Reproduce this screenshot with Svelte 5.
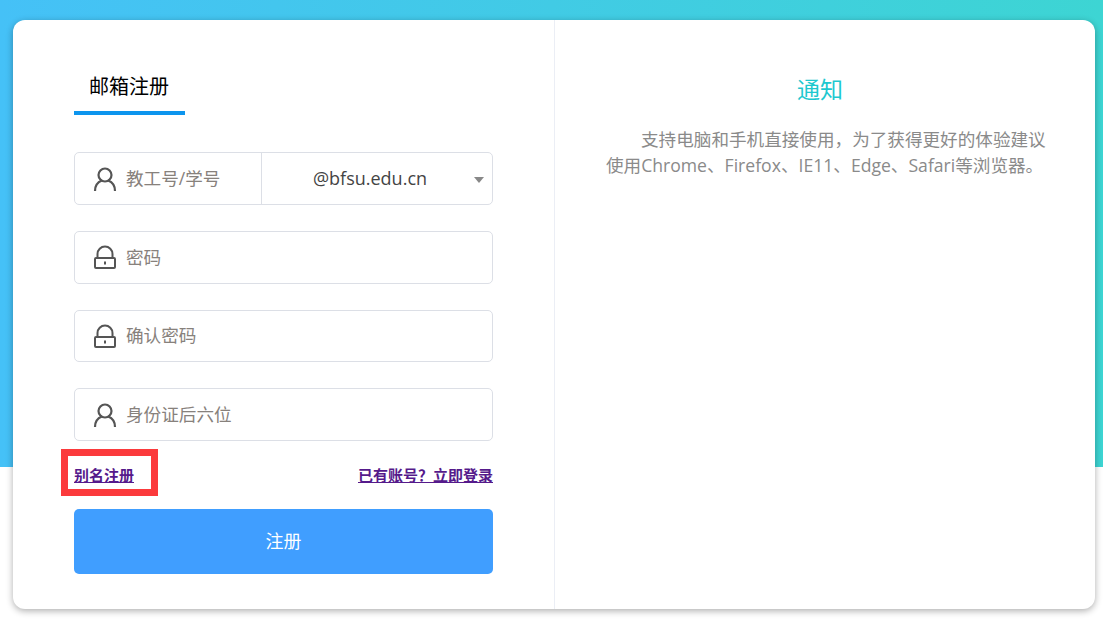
<script>
  const fields = [
    { icon: 'lock', placeholder: '密码' },
    { icon: 'lock', placeholder: '确认密码' },
    { icon: 'user', placeholder: '身份证后六位' }
  ];
</script>

{#snippet fieldIcon(name)}
  {#if name === 'user'}
    <svg class="icon" width="24" height="24" viewBox="0 0 24 24" fill="none" stroke="#555" stroke-width="2.200">
      <circle cx="12" cy="8" r="6.500" />
      <path d="M2 24c0-5.500 3-9 6.800-10.500M22 24c0-5.500-3-9-6.800-10.500" />
    </svg>
  {:else}
    <svg class="icon" width="24" height="24" viewBox="0 0 24 24" fill="none" stroke="#555" stroke-width="2">
      <path d="M4.500 13V9a7.500 7.500 0 0 1 15 0v4" />
      <rect x="2" y="13" width="20" height="10" rx="1" />
      <path d="M12 16.500v3" />
    </svg>
  {/if}
{/snippet}

<div class="page">
  <div class="hero"></div>
  <main class="card">
    <section class="form-side">
      <div class="tabs">
        <span class="tab">邮箱注册</span>
      </div>

      <div class="field first">
        <div class="name-part">
          {@render fieldIcon('user')}
          <span class="placeholder">教工号/学号</span>
        </div>
        <div class="domain">
          <span>@bfsu.edu.cn</span>
          <i class="caret"></i>
        </div>
      </div>

      {#each fields as field}
        <div class="field">
          <div class="name-part">
            {@render fieldIcon(field.icon)}
            <span class="placeholder">{field.placeholder}</span>
          </div>
        </div>
      {/each}

      <div class="links">
        <span class="alias">
          <a href="#alias">别名注册</a>
          <span class="marker"></span>
        </span>
        <a href="#login">已有账号？立即登录</a>
      </div>

      <button class="submit">注册</button>
    </section>

    <aside class="notice">
      <h2>通知</h2>
      <p>支持电脑和手机直接使用，为了获得更好的体验建议使用Chrome、Firefox、IE11、Edge、Safari等浏览器。</p>
    </aside>
  </main>
</div>

<style>
  :global(body) {
    font-family: "Open Sans", "Noto Sans CJK SC", sans-serif;
    background: #fff;
  }

  .page {
    position: relative;
    height: 633px;
    padding: 20px 8px 0 13px;
    box-sizing: border-box;
    overflow: hidden;
  }

  .hero {
    position: absolute;
    left: 0;
    top: 0;
    right: 0;
    height: 467px;
    background: linear-gradient(90deg, #45c1f7, #3dd5d3);
  }

  .card {
    position: relative;
    display: flex;
    height: 589px;
    background: #fff;
    border-radius: 12px;
    box-shadow: 0 2px 7px rgba(0, 0, 0, 0.32);
  }

  .form-side {
    flex: none;
    width: 542px;
    box-sizing: border-box;
    padding: 47px 61px 0;
    border-right: 1px solid #ebeef5;
  }

  .tabs {
    display: flex;
    height: 48px;
  }

  .tab {
    width: 111px;
    box-sizing: border-box;
    padding-left: 15px;
    height: 48px;
    line-height: 40px;
    font-size: 20px;
    color: #000;
    border-bottom: 4px solid #0d95ee;
  }

  .field {
    display: flex;
    height: 52.700px;
    margin-bottom: 26px;
    box-sizing: border-box;
    border: 1px solid #dcdfe6;
    border-radius: 5px;
  }

  .field.first {
    margin-top: 37.200px;
  }

  .name-part {
    display: flex;
    align-items: center;
    flex: none;
    width: 187px;
    padding-left: 18px;
    box-sizing: border-box;
  }

  .field.first .name-part {
    border-right: 1px solid #dcdfe6;
  }

  .icon {
    flex: none;
    margin-right: 9px;
  }

  .placeholder {
    font-size: 17.600px;
    line-height: 24px;
    margin-top: -1px;
    color: #87817c;
    white-space: nowrap;
  }

  .domain {
    position: relative;
    flex: 1;
    display: flex;
    align-items: center;
    justify-content: center;
    padding-right: 14px;
    padding-bottom: 2px;
    font-size: 18px;
    color: #444;
  }

  .caret {
    position: absolute;
    right: 8px;
    top: 24px;
    border: 5px solid transparent;
    border-top: 6px solid #888;
    border-bottom: 0;
  }

  .links {
    display: flex;
    justify-content: space-between;
    align-items: center;
    height: 22px;
    margin-top: -3px;
    font-size: 15px;
    font-weight: 700;
  }

  .links a {
    color: #551a8b;
  }

  .alias {
    position: relative;
  }

  .marker {
    position: absolute;
    left: -13px;
    top: -15px;
    width: 97px;
    height: 47px;
    box-sizing: border-box;
    border: 7px solid #fb3a3c;
  }

  .submit {
    display: block;
    width: 100%;
    height: 65px;
    margin-top: 23px;
    padding: 0 0 2px;
    border: 0;
    border-radius: 5px;
    background: #409eff;
    color: #fff;
    font-family: inherit;
    font-size: 18px;
  }

  .notice {
    flex: 1;
    padding: 0 47px 0 51px;
    text-align: center;
  }

  .notice h2 {
    margin: 54px 14px 0 0;
    font-size: 23px;
    font-weight: 400;
    line-height: 30px;
    color: #1ec8cf;
  }

  .notice p {
    margin: 22px 0 0;
    font-size: 17.600px;
    line-height: 26px;
    color: #8a8a8a;
    text-align: left;
    text-indent: 35px;
  }
</style>
